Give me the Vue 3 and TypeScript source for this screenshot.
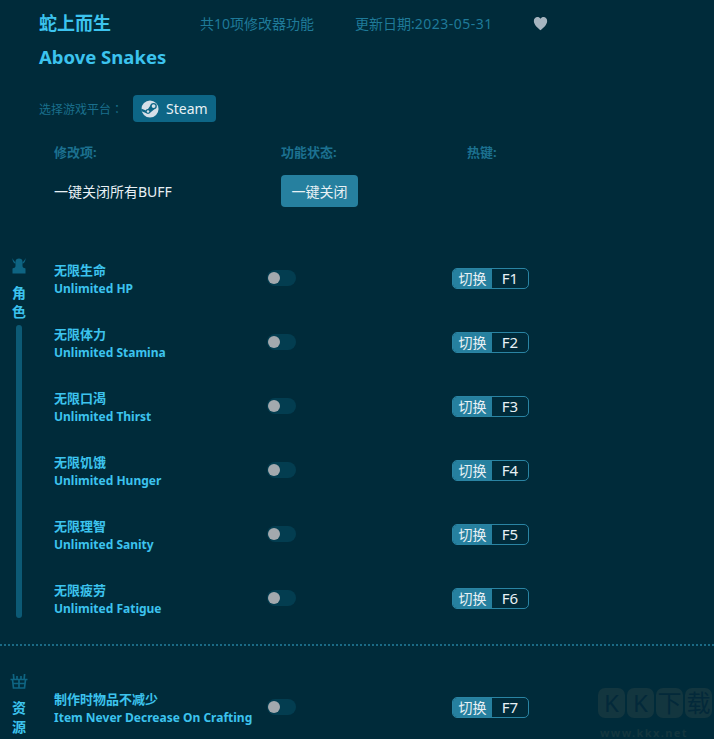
<template>
    <div class="page">
        <div class="header">
            <div class="title-row">
                <h1 class="title">蛇上而生</h1>
                <span class="info count">共10项修改器功能</span>
                <span class="info date">更新日期:<span class="digits">2023-05-31</span></span>
                <svg class="heart" viewBox="0 0 16 16" width="15" height="15">
                    <path d="M8 15.2C5.6 13 .9 9.6.9 5.3.9 2.9 2.6 1.100 4.700 1.100c1.400 0 2.600.7 3.300 1.900.7-1.200 1.900-1.900 3.300-1.900 2.100 0 3.800 1.800 3.800 4.200 0 4.300-4.700 7.700-7.100 9.900z" fill="#a6b4bf" />
                </svg>
            </div>
            <h2 class="title sub">Above Snakes</h2>
            <div class="platform">
                <span class="platform-label">选择游戏平台<span class="colon">：</span></span>
                <button class="steam">
                    <svg viewBox="0 0 20 20" width="18" height="18">
                        <circle cx="10" cy="10" r="9.500" fill="#d5dfe8" />
                        <path d="M0 9.500 7 12.300 6 14.800.6 12.600z" fill="#0d6686" />
                        <path d="M11.400 4.800 7.600 10.200 9.800 14.400 15.200 10z" fill="#0d6686" />
                        <circle cx="14" cy="6.800" r="3.600" fill="#0d6686" />
                        <circle cx="14" cy="6.800" r="2.100" fill="#d5dfe8" />
                        <circle cx="7.800" cy="12.800" r="2.700" fill="#0d6686" />
                        <circle cx="7.800" cy="12.800" r="1.400" fill="#d5dfe8" />
                    </svg>
                    Steam
                </button>
            </div>
        </div>

        <div class="table-head">
            <span>修改项:</span>
            <span>功能状态:</span>
            <span>热键:</span>
        </div>
        <div class="close-all">
            <span>一键关闭所有BUFF</span>
            <button class="close-btn">一键关闭</button>
        </div>

        <section v-for="group in groups" :key="group.name" class="group">
            <aside class="side">
                <svg v-if="group.icon === 'role'" class="side-icon" viewBox="0 0 18 18" width="18" height="18" fill="#0e6482">
                    <path d="M5.500 4.500C5.500 2.500 7 1.500 9 1.500s3.500 1 3.500 3V9c0 1.500 1.500 2 3 2.500V16.500h-13V11.500C4 11 5.500 10.500 5.500 9z" />
                    <path d="M2.500 1C2.300 4 3.400 6 5.500 6.700V5.200C4.300 4.600 3.300 3 2.500 1z" />
                    <path d="M15.500 1C15.700 4 14.600 6 12.500 6.700V5.200C13.700 4.600 14.700 3 15.500 1z" />
                </svg>
                <svg v-else class="side-icon" viewBox="0 0 18 18" width="18" height="18" fill="none" stroke="#0e6482" stroke-width="1.700">
                    <path d="M.5 7.500h17M2.500 7.500l1 8.500h11l1-8.500M9 7.500V16M2.900 11.500h12.200M3.900 7.500 3.400 2M14.100 7.500 14.600 2M7 7.500V4M11 7.500V4" />
                </svg>
                <span v-for="ch in group.name" :key="ch" class="side-char">{{ ch }}</span>
                <i class="side-bar"></i>
            </aside>
            <div class="rows">
                <div v-for="item in group.items" :key="item.key" class="row">
                    <div class="names">
                        <div class="zh">{{ item.zh }}</div>
                        <div class="en">{{ item.en }}</div>
                    </div>
                    <div class="toggle"><i></i></div>
                    <div class="hotkey">
                        <span class="hk-label">切换</span>
                        <span class="hk-key">{{ item.key }}</span>
                    </div>
                </div>
            </div>
        </section>

        <div class="watermark">
            <div class="wm-logo">
                <span v-for="(ch, i) in 'KK下载'" :key="i">{{ ch }}</span>
            </div>
            <div class="wm-url">www.kkx.net</div>
        </div>
    </div>
</template>

<script setup lang="ts">
interface Cheat {
    zh: string;
    en: string;
    key: string;
}

interface CheatGroup {
    name: string;
    icon: 'role' | 'res';
    items: Cheat[];
}

const groups: CheatGroup[] = [
    {
        name: '角色',
        icon: 'role',
        items: [
            { zh: '无限生命', en: 'Unlimited HP', key: 'F1' },
            { zh: '无限体力', en: 'Unlimited Stamina', key: 'F2' },
            { zh: '无限口渴', en: 'Unlimited Thirst', key: 'F3' },
            { zh: '无限饥饿', en: 'Unlimited Hunger', key: 'F4' },
            { zh: '无限理智', en: 'Unlimited Sanity', key: 'F5' },
            { zh: '无限疲劳', en: 'Unlimited Fatigue', key: 'F6' },
        ],
    },
    {
        name: '资源',
        icon: 'res',
        items: [{ zh: '制作时物品不减少', en: 'Item Never Decrease On Crafting', key: 'F7' }],
    },
];
</script>

<style>
html,
body {
    margin: 0;
    background: #002b3a;
}
</style>

<style scoped>
.page {
    position: relative;
    height: 739px;
    overflow: hidden;
    background: #002b3a;
    font-family: "Noto Sans", "Noto Sans CJK SC", sans-serif;
}

.header {
    padding: 11px 0 0 39px;
}

.title-row {
    display: flex;
    align-items: center;
    height: 24px;
}

.title {
    margin: 0;
    font-size: 18px;
    line-height: 24px;
    font-weight: 700;
    color: #3cc3ee;
}

.title-row .title {
    width: 161px;
}

.sub {
    margin-top: 10px;
    font-size: 18.5px;
}

.info {
    font-size: 14px;
    color: #1f7a99;
}

.digits {
    letter-spacing: 0.5px;
}

.count {
    width: 155px;
}

.date {
    width: 178px;
}

.heart {
    display: block;
}

.platform {
    display: flex;
    align-items: center;
    margin-top: 26px;
}

.platform-label {
    width: 94px;
    font-size: 12px;
    color: #1a6f8c;
}

.colon {
    font-family: "Noto Sans CJK TC", sans-serif;
}

.steam {
    display: flex;
    align-items: center;
    gap: 7px;
    height: 27px;
    width: 83px;
    padding: 0 0 0 8px;
    border: none;
    border-radius: 4px;
    background: #0d6686;
    color: #e8f1f5;
    font: inherit;
    font-size: 14px;
}

.table-head {
    display: flex;
    margin-top: 19px;
    padding-left: 54px;
    height: 20px;
    align-items: center;
    font-size: 13px;
    font-weight: 700;
    color: #1c7190;
}

.table-head span:nth-child(1) {
    width: 227px;
}

.table-head span:nth-child(2) {
    width: 186px;
}

.close-all {
    display: flex;
    align-items: center;
    margin-top: 14px;
    padding-left: 54px;
    color: #e8f1f5;
    font-size: 14px;
}

.close-all span {
    width: 227px;
}

.close-btn {
    width: 77px;
    height: 32px;
    border: none;
    border-radius: 4px;
    background: #26809f;
    color: #e8f1f5;
    font: inherit;
    font-size: 14px;
}

.group {
    display: flex;
    margin-top: 39px;
}

.group + .group {
    margin-top: 14px;
    border-top: 2px dotted #1a6a85;
}

.group + .group .rows {
    padding-top: 29px;
}

.group + .group .side {
    padding-top: 26px;
}

.side {
    display: flex;
    flex-direction: column;
    align-items: center;
    width: 38px;
    padding: 11px 0 12px;
    box-sizing: border-box;
    flex: none;
}

.side-icon {
    display: block;
    margin-bottom: 8px;
}

.side-char {
    font-size: 14px;
    line-height: 19px;
    font-weight: 700;
    color: #3cc3ee;
}

.side-bar {
    flex: 1;
    width: 6px;
    margin-top: 4px;
    border-radius: 3px;
    background: #0c5a75;
}

.rows {
    flex: 1;
    padding-left: 16px;
}

.row {
    display: flex;
    align-items: center;
    height: 64px;
}

.names {
    width: 213px;
    flex: none;
    padding-top: 2px;
    line-height: 17px;
    font-weight: 700;
    color: #3cc3ee;
}

.zh {
    font-size: 13px;
}

.en {
    margin-top: 1px;
    font-size: 12px;
}

.toggle {
    width: 185px;
    flex: none;
}

.toggle i {
    position: relative;
    display: block;
    width: 29px;
    height: 16px;
    border-radius: 8px;
    background: #033d50;
}

.toggle i::before {
    content: "";
    position: absolute;
    left: 1px;
    top: 2px;
    width: 12px;
    height: 12px;
    border-radius: 50%;
    background: #a3a9ae;
}

.hotkey {
    display: flex;
    width: 77px;
    height: 21px;
    box-sizing: border-box;
    border: 1px solid #2a84a3;
    border-radius: 5px;
    overflow: hidden;
    font-size: 14px;
    line-height: 19px;
    color: #e8f1f5;
}

.hk-label {
    width: 39px;
    text-align: center;
    background: #26809f;
}

.hk-key {
    flex: 1;
    text-align: center;
    font-size: 15px;
}

.watermark {
    position: absolute;
    left: 598px;
    top: 688px;
    width: 114px;
    font-weight: 700;
}

.wm-logo {
    display: flex;
    justify-content: space-between;
}

.wm-logo span {
    width: 27px;
    height: 30px;
    border-radius: 7px;
    background: #13363f;
    color: #03293a;
    font-size: 24px;
    font-weight: 400;
    line-height: 30px;
    text-align: center;
}

.wm-url {
    margin: 9px 0 0 2px;
    font-size: 11px;
    letter-spacing: 1.4px;
    line-height: 12px;
    color: #13363f;
}
</style>
